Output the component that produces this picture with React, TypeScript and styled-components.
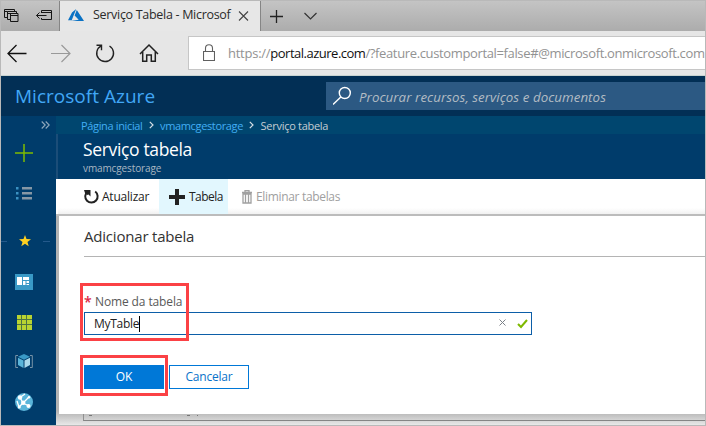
import React from 'react';
import styled, { createGlobalStyle, css } from 'styled-components';

const GlobalStyle = createGlobalStyle`
  * { box-sizing: border-box; }
  body { margin: 0; overflow: hidden; font-family: "Open Sans", "Noto Sans", sans-serif; }
  svg { display: block; flex: none; }
`;

interface TextProps { $track?: number }
const tracked = css<TextProps>`
  letter-spacing: ${p => p.$track ?? 0}px;
  white-space: nowrap;
`;

const Window = styled.div`
  width: 706px;
  height: 426px;
  display: flex;
  flex-direction: column;
  border: 1px solid #b9b9b9;
  background: #e6e6e6;
  overflow: hidden;
`;

/* Browser chrome */
const TabStrip = styled.div`
  flex: none;
  height: 30px;
  display: flex;
  background: linear-gradient(#c4c4c4, #acacac);
`;
const TabTools = styled.div`
  width: 59px;
  display: flex;
  align-items: flex-start;
  gap: 17px;
  padding: 7px 0 0 3px;
  border-right: 1px solid #858585;
`;
const Tab = styled.div`
  width: 201px;
  display: flex;
  align-items: flex-start;
  padding-left: 8px;
  border-right: 1px solid #858585;
  background: #e7e7e7;
  svg { margin-top: 7px; }
`;
const TabTitle = styled.span<TextProps>`
  ${tracked}
  width: 151px;
  padding-left: 9px;
  font-size: 12.5px;
  line-height: 27px;
  color: #2b2b2b;
`;
const StripActions = styled.div`
  display: flex;
  gap: 20px;
  padding: 7px 0 0 9px;
`;
const NavBar = styled.div`
  flex: none;
  height: 45px;
  display: flex;
  padding-top: 5px;
  border-bottom: 1px solid #c8d3d0;
`;
const NavButtons = styled.div`
  width: 187px;
  height: 34px;
  display: flex;
  align-items: center;
  gap: 24px;
  padding-left: 6px;
`;
const AddressBar = styled.div`
  flex: 1;
  min-width: 0;
  height: 34px;
  display: flex;
  align-items: center;
  padding-left: 14px;
  border: 1px solid #c6c6c6;
  border-right: 0;
  background: #fff;
`;
const Url = styled.div`
  display: flex;
  margin-left: 13px;
  font-size: 13px;
  line-height: 32px;
`;
const UrlPart = styled.span<TextProps & { $host?: boolean }>`
  ${tracked}
  color: ${p => (p.$host ? '#111' : '#929292')};
`;

/* Portal */
const PortalHeader = styled.header`
  flex: none;
  height: 40px;
  display: flex;
  align-items: center;
  justify-content: space-between;
  padding-left: 14px;
  background: #022f55;
`;
const Brand = styled.span<TextProps>`
  ${tracked}
  font-size: 19px;
  line-height: 40px;
  color: #41a7f5;
`;
const Search = styled.div`
  width: 379px;
  height: 28px;
  display: flex;
  align-items: center;
  gap: 7px;
  padding-left: 7px;
  background: #2c5983;
`;
const SearchText = styled.span<TextProps>`
  ${tracked}
  font-size: 13.3px;
  font-style: italic;
  line-height: 29px;
  padding-top: 2px;
  color: #b3bcc4;
`;
const Body = styled.div`
  flex: 1;
  min-height: 0;
  display: flex;
`;
const Sidebar = styled.nav`
  flex: none;
  width: 55px;
  display: flex;
  flex-direction: column;
  align-items: center;
  padding-right: 9px;
  background: #003c6b;
`;
const Slot = styled.div<{ $h: number }>`
  flex: none;
  height: ${p => p.$h}px;
  display: flex;
  align-items: center;
  justify-content: center;
`;
const CollapseRow = styled.div`
  flex: none;
  align-self: flex-end;
  height: 18px;
  display: flex;
  align-items: center;
  margin-right: -3px;
`;
const FavouriteRow = styled(Slot)`
  width: 50px;
  gap: 12px;
  margin-left: 2px;
  &::before, &::after { content: ''; width: 13px; height: 1px; background: #24598b; }
`;
const Content = styled.main`
  flex: 1;
  min-width: 0;
  display: flex;
  flex-direction: column;
  background: #fff;
`;
const Breadcrumb = styled.div`
  flex: none;
  height: 18px;
  display: flex;
  align-items: center;
  padding-left: 25px;
  background: #00466f;
`;
const Crumb = styled.span<TextProps & { $current?: boolean }>`
  ${tracked}
  font-size: 11px;
  line-height: 19px;
  padding-top: 1px;
  color: ${p => (p.$current ? '#c4cdd3' : '#42aef5')};
`;
const CrumbArrow = styled.span`
  display: flex;
  width: 17.5px;
  justify-content: center;
  color: #d6dfe5;
`;
const BladeHeader = styled.div`
  flex: none;
  height: 45px;
  padding: 3px 0 0 25px;
  border-left: 2px solid #1b4d78;
  background: #003c6b;
`;
const BladeTitle = styled.h1<TextProps>`
  ${tracked}
  margin: 0;
  font-size: 17.5px;
  font-weight: 400;
  line-height: 25px;
  color: #fff;
`;
const BladeSubtitle = styled.div<TextProps>`
  ${tracked}
  font-size: 10px;
  line-height: 12px;
  color: #a9b7c2;
`;
const Toolbar = styled.div`
  flex: none;
  height: 35px;
  display: flex;
  margin-left: 2px;
  background: linear-gradient(#fff 29px, #f1f1f1);
`;
const Command = styled.div<{ $w: number; $pad: number; $gap: number; $active?: boolean; $disabled?: boolean }>`
  width: ${p => p.$w}px;
  display: flex;
  align-items: center;
  gap: ${p => p.$gap}px;
  padding-left: ${p => p.$pad}px;
  background: ${p => (p.$active ? '#e2f7fe' : 'transparent')};
  color: ${p => (p.$disabled ? '#a0a0a0' : '#222')};
`;
const CommandLabel = styled.span<TextProps>`
  ${tracked}
  font-size: 12px;
  line-height: 35px;
`;
const PanelArea = styled.section`
  flex: 1;
  min-height: 0;
  display: flex;
  flex-direction: column;
  padding-left: 3px;
  border-top: 2px solid #bcbcbc;
  background: linear-gradient(#b2b2b2 195px, #bdbdbd 198px, #ececec 210px);
`;
const Panel = styled.div`
  flex: none;
  height: 198px;
  padding: 8px 0 0 25px;
  background: #fff;
`;
const PanelTitle = styled.h2<TextProps>`
  ${tracked}
  margin: 0;
  height: 33px;
  border-bottom: 1px solid #b4b4b4;
  font-size: 15px;
  font-weight: 400;
  line-height: 25px;
  color: #333;
`;
const Field = styled.div`
  position: relative;
  width: 448px;
  padding-top: 36px;
`;
const Label = styled.label<TextProps>`
  ${tracked}
  display: flex;
  height: 19px;
  font-size: 12px;
  line-height: 18px;
  color: #595959;
`;
const Required = styled.span`
  width: 11px;
  font-size: 14px;
  font-weight: 600;
  line-height: 17px;
  color: #dc2744;
`;
const InputBox = styled.div`
  height: 23px;
  display: flex;
  align-items: center;
  padding: 0 3px 0 9px;
  border: 1px solid #0c5ea8;
  background: #fff;
`;
const Value = styled.span<TextProps>`
  ${tracked}
  font-size: 12px;
  line-height: 20px;
  color: #222;
`;
const Caret = styled.span`
  width: 1px;
  height: 16px;
  background: #000;
`;
const FieldIcons = styled.span`
  display: flex;
  align-items: center;
  gap: 11px;
  margin-left: auto;
`;
const Actions = styled.div`
  position: relative;
  display: flex;
  gap: 5px;
  padding-top: 30px;
`;
const Button = styled.button<TextProps & { $primary?: boolean }>`
  ${tracked}
  width: 80px;
  height: 24px;
  padding: 0;
  border: 1px solid #0078d7;
  background: ${p => (p.$primary ? '#0078d7' : '#fff')};
  color: ${p => (p.$primary ? '#fff' : '#0872c9')};
  font: ${p => (p.$primary ? 500 : 400)} 12px/22px "Open Sans", sans-serif;
`;
const Highlight = styled.div<{ $top: number; $w: number; $h: number }>`
  position: absolute;
  left: -4px;
  top: ${p => p.$top}px;
  width: ${p => p.$w}px;
  height: ${p => p.$h}px;
  border: 3px solid #fb4145;
  pointer-events: none;
`;
const CoveredRow = styled.div`
  flex: none;
  height: 7px;
  margin-left: 24px;
  padding: 1px 0 0 5px;
  border-left: 1px solid #909090;
  border-bottom: 1px solid #858585;
`;

const Chevron = () => (
  <CrumbArrow>
    <svg width="5" height="8" viewBox="0 0 5 8" fill="none" stroke="currentColor" strokeWidth="1.2"><path d="M.8 .8 4 4 .8 7.2" /></svg>
  </CrumbArrow>
);

export default function App() {
  return (
    <>
      <GlobalStyle />
      <Window>
        <TabStrip>
          <TabTools>
            <svg width="15" height="15" fill="none" stroke="#151515"><path d="M3.500 9.500H.5V1.500h10v2M.5 3.500h3M3.500 11.500v-8h9v2M6.500 5.500h-3M3.500 11.500h3M3.500 5.500h9M6.500 5.500h7.500v8H6.500zM6.500 7.500h7.500" /></svg>
            <svg width="16" height="15" fill="none" stroke="#151515"><path d="M5.500 5V2.500h10v9h-10V10M5.500 4.500h10M.5 7.500h10M3.500 4.500l-3 3 3 3" /></svg>
          </TabTools>
          <Tab>
            <svg width="16" height="14" viewBox="0 0 16 14"><path d="M8.200 1 4 4.600 0 12.200h3.700zM8.800 2 6.600 7.500l4.100 4.300-7.700 1.200H16z" fill="#0b72c4" /></svg>
            <TabTitle $track={-0.3}>Serviço Tabela - Microsof</TabTitle>
            <svg width="16" height="18" fill="none" stroke="#444" strokeWidth="1.100"><path d="m4 3.500 9 9m0-9-9 9" /></svg>
          </Tab>
          <StripActions>
            <svg width="14" height="16" stroke="#222" strokeWidth="1.300"><path d="M0 8.500h13M6.500 2v13" /></svg>
            <svg width="14" height="16" fill="none" stroke="#333" strokeWidth="1.200"><path d="m.5 5 6 6 6-6" /></svg>
          </StripActions>
        </TabStrip>
        <NavBar>
          <NavButtons>
            <svg width="20" height="20" fill="none" stroke="#111" strokeWidth="1.300"><path d="M19.500 10.500H1M9.500 2 1 10.500 9.500 19" /></svg>
            <svg width="20" height="20" fill="none" stroke="#999" strokeWidth="1.200"><path d="M0 10.500h19M10.500 2l8.500 8.500-8.500 8.500" /></svg>
            <svg width="20" height="20" fill="none" stroke="#222" strokeWidth="1.400"><path d="M14.500 3a8.400 8.400 0 1 1-8.400-.2M1.500 2.300h5v5" /></svg>
            <svg width="20" height="20" fill="none" stroke="#222" strokeWidth="1.500"><path d="m1 11 9-9 9 9M3.700 9v9.300h4V12h4.600v6.300h4V9" /></svg>
          </NavButtons>
          <AddressBar>
            <svg width="12" height="18" fill="none" stroke="#606060" strokeWidth="1.100"><path d="M.5 7.500h11v9H.5zM2.500 7.500V4.200a3.500 3.500 0 0 1 7 0v3.300" /></svg>
            <Url>
              <UrlPart $track={-0.25}>https://</UrlPart>
              <UrlPart $track={-0.5} $host>portal.azure.com</UrlPart>
              <UrlPart $track={-0.36}>/?feature.customportal=false#@microsoft.onmicrosoft.com</UrlPart>
            </Url>
          </AddressBar>
        </NavBar>
        <PortalHeader>
          <Brand $track={0.02}>Microsoft Azure</Brand>
          <Search>
            <svg width="19" height="20" fill="none" stroke="#fff" strokeWidth="1.400"><circle cx="11.800" cy="7" r="5.500" /><path d="M7.800 11 0 18.500" /></svg>
            <SearchText $track={0.07}>Procurar recursos, serviços e documentos</SearchText>
          </Search>
        </PortalHeader>
        <Body>
          <Sidebar>
            <CollapseRow><svg width="9" height="8" fill="none" stroke="#8fa8bc" strokeWidth="1.100"><path d="m.7.5 3.500 3.500L.7 7.500M4.700.5l3.500 3.500-3.500 3.500" /></svg></CollapseRow>
            <Slot $h={38}><svg width="18" height="18" stroke="#7fba00" strokeWidth="1.500"><path d="M0 9h18M9 0v18" /></svg></Slot>
            <Slot $h={42}>
              <svg width="16" height="14"><path d="M0 1h2.500v2.500H0zM0 6h2.500v2.500H0zM0 11h2.500v2.500H0z" fill="#3b91c2" /><path d="M6 1h10v2.500H6zM6 6h10v2.500H6zM6 11h10v2.500H6z" fill="#8697a5" /></svg>
            </Slot>
            <FavouriteRow $h={54}>
              <svg width="12" height="12" viewBox="0 0 12 12"><path fill="#ffd021" d="m6 0 1.500 4.100 4.500.2-3.500 2.700 1.200 4.300L6 8.800l-3.700 2.500L3.500 7 0 4.300l4.500-.2z" /></svg>
            </FavouriteRow>
            <Slot $h={28}>
              <svg width="18" height="16"><path fill="#3999c6" d="M0 0h18v16H0z" /><path fill="#fff" d="M2 3h5v8H2zM8 3h6v3H8zM8 7h2.500v4H8zM11.500 7H14v2h-2.500zM11.500 10H14v1h-2.500z" /></svg>
            </Slot>
            <Slot $h={52}>
              <svg width="16" height="16" viewBox="-1 -1 16 16"><path fill="#b8d432" d="M0 0h15v15H0z" /><path stroke="#4d7442" d="M0 4.500h15M0 9.500h15M4.500 0v15M9.500 0v15" /></svg>
            </Slot>
            <Slot $h={28}>
              <svg width="18" height="16"><path fill="none" stroke="#7793a7" d="M3 1.500H.7v12H3M15 1.500h2.300v12H15" /><path fill="#3999c6" d="m9 0 6 2.700L9 5.800 3 2.700z" /><path fill="#59b4d9" d="m3 3.700 5.500 2.900V14L3 11z" /><path fill="#a9d8eb" d="M15 3.700 9.500 6.600V14l5.500-3z" /></svg>
            </Slot>
            <Slot $h={52}>
              <svg width="18" height="18"><circle cx="9" cy="9" r="9" fill="#59b4d9" /><path d="M5 4.500 8 10l6 3M8 10l-4 4M8 10l6-6M5 4.500 10 1M4 14l-2-6" fill="none" stroke="#fff" strokeWidth="1.300" /><g fill="#fff"><circle cx="5" cy="4.500" r="2.200" /><circle cx="8.200" cy="9.800" r="2.200" /><circle cx="13.500" cy="13" r="2" /><circle cx="4.300" cy="14" r="1.500" /><circle cx="14" cy="4.300" r="1.200" /></g></svg>
            </Slot>
          </Sidebar>
          <Content>
            <Breadcrumb>
              <Crumb $track={-0.35}>Página inicial</Crumb><Chevron />
              <Crumb $track={-0.35}>vmamcgestorage</Crumb><Chevron />
              <Crumb $track={-0.28} $current>Serviço tabela</Crumb>
            </Breadcrumb>
            <BladeHeader>
              <BladeTitle $track={-0.35}>Serviço tabela</BladeTitle>
              <BladeSubtitle $track={-0.12}>vmamcgestorage</BladeSubtitle>
            </BladeHeader>
            <Toolbar>
              <Command $w={101} $pad={25} $gap={3}>
                <svg width="16" height="16" fill="none" stroke="currentColor" strokeWidth="2"><path d="M12.200 2.500A6.200 6.200 0 1 1 4.400 2.700" /><path d="M1 1h6.500v6.500L5.500 5.500 4 6 2 4z" fill="currentColor" stroke="none" /></svg>
                <CommandLabel $track={-0.22}>Atualizar</CommandLabel>
              </Command>
              <Command $w={69} $pad={10} $gap={4} $active>
                <svg width="16" height="16" fill="currentColor"><path d="M6 0h4v6h6v4h-6v6H6v-6H0V6h6z" /></svg>
                <CommandLabel $track={-0.55}>Tabela</CommandLabel>
              </Command>
              <Command $w={130} $pad={14} $gap={4} $disabled>
                <svg width="10" height="14" fill="none" stroke="currentColor" strokeWidth="1.300"><path d="M0 2.500h10M3 2V.7h4V2M1 4h8v9H1zM3.500 4v9M6.500 4v9" /></svg>
                <CommandLabel $track={-0.33}>Eliminar tabelas</CommandLabel>
              </Command>
            </Toolbar>
            <PanelArea>
              <Panel>
                <PanelTitle $track={-0.2}>Adicionar tabela</PanelTitle>
                <Field>
                  <Label $track={-0.12}><Required>*</Required>Nome da tabela</Label>
                  <InputBox>
                    <Value $track={-0.28}>MyTable</Value><Caret />
                    <FieldIcons>
                      <svg width="7" height="9" fill="none" stroke="#7c8188"><path d="m.5.500 6 6m0-6-6 6" /></svg>
                      <svg width="11" height="10" fill="none" stroke="#7eb900" strokeWidth="2"><path d="m1 5 3 3 6-7" /></svg>
                    </FieldIcons>
                  </InputBox>
                  <Highlight $top={26} $w={109} $h={58} />
                </Field>
                <Actions>
                  <Button $primary>OK</Button>
                  <Button $track={-0.22}>Cancelar</Button>
                  <Highlight $top={20} $w={88} $h={41} />
                </Actions>
              </Panel>
              <CoveredRow>
                <svg width="120" height="2" fill="#777"><path d="M0 0h3v1H0zM98 0h3v1h-3zM108 0h1v1h-1z" /></svg>
              </CoveredRow>
            </PanelArea>
          </Content>
        </Body>
      </Window>
    </>
  );
}
